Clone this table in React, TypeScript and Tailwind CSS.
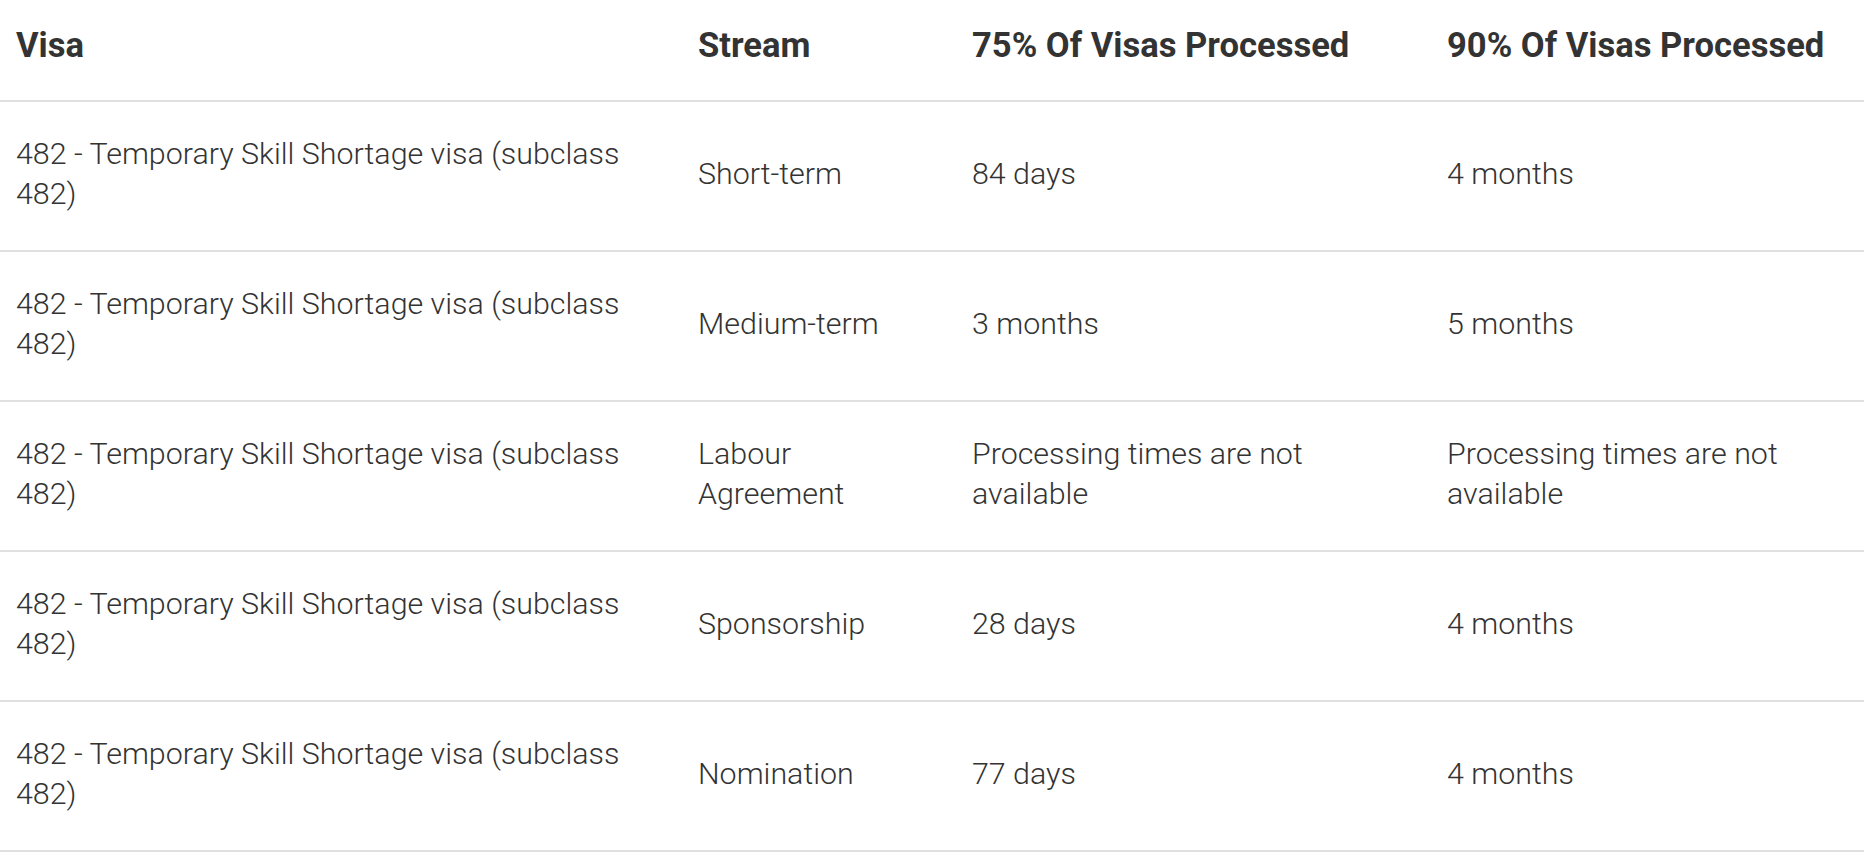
const rows = [
  { stream: 'Short-term', p75: '84 days', p90: '4 months' },
  { stream: 'Medium-term', p75: '3 months', p90: '5 months' },
  { stream: 'Labour Agreement', p75: 'Processing times are not available', p90: 'Processing times are not available' },
  { stream: 'Sponsorship', p75: '28 days', p90: '4 months' },
  { stream: 'Nomination', p75: '77 days', p90: '4 months' },
];

export default function App() {
  return (
    <div className="w-full bg-white font-['Roboto',sans-serif] text-[#333]">
      <table className="w-full table-fixed border-collapse">
        <colgroup>
          <col className="w-[682px]" />
          <col className="w-[274px]" />
          <col className="w-[475px]" />
          <col />
        </colgroup>
        <thead>
          <tr className="h-[101px] border-b-2 border-[#e0e0e0] text-left text-[34.6px] font-medium">
            <th className="pl-4 pr-6 pb-2 align-middle">Visa</th>
            <th className="pl-4 pr-6 pb-2 align-middle">Stream</th>
            <th className="pl-4 pr-6 pb-2 align-middle">75% Of Visas Processed</th>
            <th className="pl-4 pr-6 pb-2 align-middle">90% Of Visas Processed</th>
          </tr>
        </thead>
        <tbody>
          {rows.map((r) => (
            <tr key={r.stream} className="h-[150px] border-b-2 border-[#e0e0e0] text-[30.4px] font-light leading-[40px]">
              <td className="pl-4 pr-6 pb-1 align-middle">482 - Temporary Skill Shortage visa (subclass 482)</td>
              <td className="pl-4 pr-6 pb-1 align-middle">{r.stream}</td>
              <td className="pl-4 pr-6 pb-1 align-middle">{r.p75}</td>
              <td className="pl-4 pr-6 pb-1 align-middle">{r.p90}</td>
            </tr>
          ))}
        </tbody>
      </table>
    </div>
  );
}
